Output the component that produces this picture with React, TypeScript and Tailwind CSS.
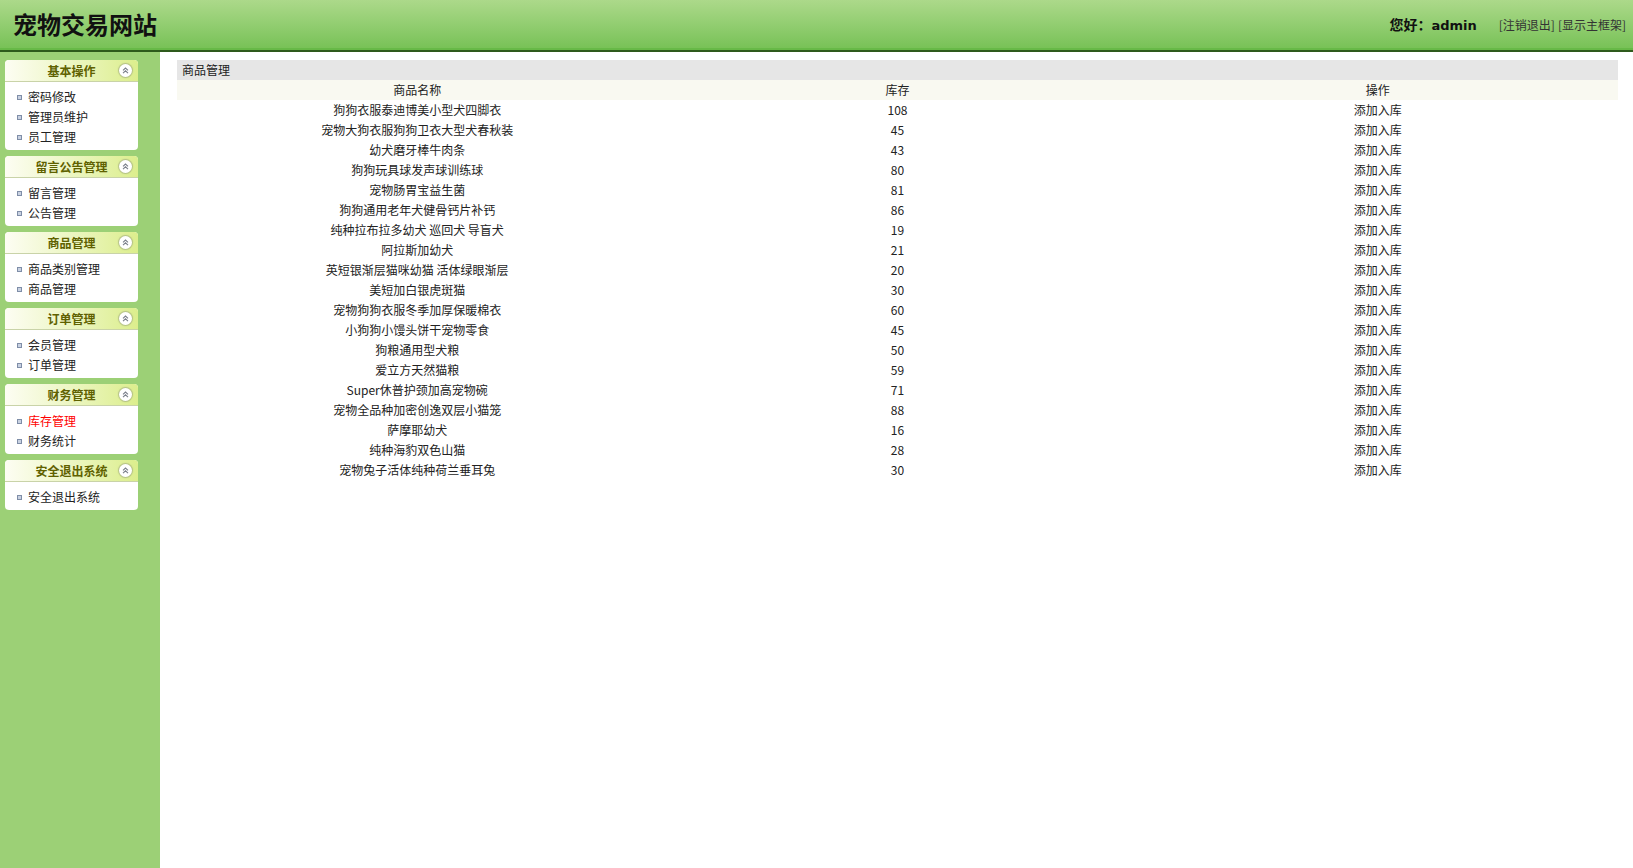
import React from "react";

const font = { fontFamily: '"Noto Sans CJK SC", "Noto Sans", sans-serif' };

const menus: { title: string; items: { label: string; active?: boolean }[] }[] = [
  { title: "基本操作", items: [{ label: "密码修改" }, { label: "管理员维护" }, { label: "员工管理" }] },
  { title: "留言公告管理", items: [{ label: "留言管理" }, { label: "公告管理" }] },
  { title: "商品管理", items: [{ label: "商品类别管理" }, { label: "商品管理" }] },
  { title: "订单管理", items: [{ label: "会员管理" }, { label: "订单管理" }] },
  { title: "财务管理", items: [{ label: "库存管理", active: true }, { label: "财务统计" }] },
  { title: "安全退出系统", items: [{ label: "安全退出系统" }] },
];

const rows: [string, number][] = [
  ["狗狗衣服泰迪博美小型犬四脚衣", 108],
  ["宠物大狗衣服狗狗卫衣大型犬春秋装", 45],
  ["幼犬磨牙棒牛肉条", 43],
  ["狗狗玩具球发声球训练球", 80],
  ["宠物肠胃宝益生菌", 81],
  ["狗狗通用老年犬健骨钙片补钙", 86],
  ["纯种拉布拉多幼犬 巡回犬 导盲犬", 19],
  ["阿拉斯加幼犬", 21],
  ["英短银渐层猫咪幼猫 活体绿眼渐层", 20],
  ["美短加白银虎斑猫", 30],
  ["宠物狗狗衣服冬季加厚保暖棉衣", 60],
  ["小狗狗小馒头饼干宠物零食", 45],
  ["狗粮通用型犬粮", 50],
  ["爱立方天然猫粮", 59],
  ["Super休普护颈加高宠物碗", 71],
  ["宠物全品种加密创逸双层小猫笼", 88],
  ["萨摩耶幼犬", 16],
  ["纯种海豹双色山猫", 28],
  ["宠物兔子活体纯种荷兰垂耳兔", 30],
];

function CollapseIcon() {
  return (
    <span className="absolute right-[6px] top-[4px] flex h-[13px] w-[13px] items-center justify-center rounded-full bg-white shadow-[0_0_1px_1px_rgba(150,160,120,0.6)]">
      <svg width="7" height="7" viewBox="0 0 7 7" fill="none" stroke="#7a7f8a" strokeWidth="1.1">
        <path d="M1 3.4 L3.5 1 L6 3.4" />
        <path d="M1 6.2 L3.5 3.8 L6 6.2" />
      </svg>
    </span>
  );
}

export default function App() {
  return (
    <div className="flex h-[868px] w-full flex-col overflow-hidden bg-white text-[12px] text-[#222]" style={font}>
      <div className="flex h-[48px] shrink-0 items-center justify-between bg-gradient-to-b from-[#acd98a] to-[#78c257] pl-[13px] pr-[7px]">
        <div className="text-[24px] font-bold leading-none text-[#111]">宠物交易网站</div>
        <div className="flex items-center pt-[2px]">
          <span className="text-[14px] font-bold text-[#111]">
            您好：<span className="font-['DejaVu_Sans',sans-serif] text-[13px]">admin</span>
          </span>
          <span className="ml-[22px] text-[12px] text-[#333]">[注销退出]</span>
          <span className="ml-[3px] text-[12px] text-[#333]">[显示主框架]</span>
        </div>
      </div>
      <div className="h-[2px] shrink-0 bg-[#67b947]" />
      <div className="h-[2px] shrink-0 bg-[#2e5a1c]" />
      <div className="flex flex-1">
        <div className="flex w-[160px] shrink-0 flex-col gap-[6px] bg-[#9cd076] pl-[5px] pt-[8px]">
          {menus.map((m) => (
            <div key={m.title} className="w-[133px] overflow-hidden rounded-[4px] bg-white">
              <div className="relative flex h-[22px] items-center justify-center border-b border-[#c9d3a8] bg-gradient-to-r from-[#fdfdf3] to-[#dcee8c] font-bold text-[#5f6100]">
                {m.title}
                <CollapseIcon />
              </div>
              <div className="pb-[3px] pt-[5px]">
                {m.items.map((it) => (
                  <div key={it.label} className="flex h-[20px] items-center pl-[12px]">
                    <span className="mr-[6px] h-[5px] w-[5px] border border-[#7f8ea8] bg-[#c9d2e2]" />
                    <span className={it.active ? "text-[#ff0000]" : "text-[#222]"}>{it.label}</span>
                  </div>
                ))}
              </div>
            </div>
          ))}
        </div>
        <div className="flex-1 pl-[17px] pr-[15px] pt-[8px]">
          <div className="flex h-[20px] items-center bg-[#e6e6e6] pl-[5px]">商品管理</div>
          <div className="grid h-[20px] grid-cols-3 items-center bg-[#f9f9f1] text-center">
            <div>商品名称</div>
            <div>库存</div>
            <div>操作</div>
          </div>
          {rows.map(([name, qty]) => (
            <div key={name} className="grid h-[20px] grid-cols-3 items-center text-center">
              <div>{name}</div>
              <div>{qty}</div>
              <div>添加入库</div>
            </div>
          ))}
        </div>
      </div>
    </div>
  );
}
